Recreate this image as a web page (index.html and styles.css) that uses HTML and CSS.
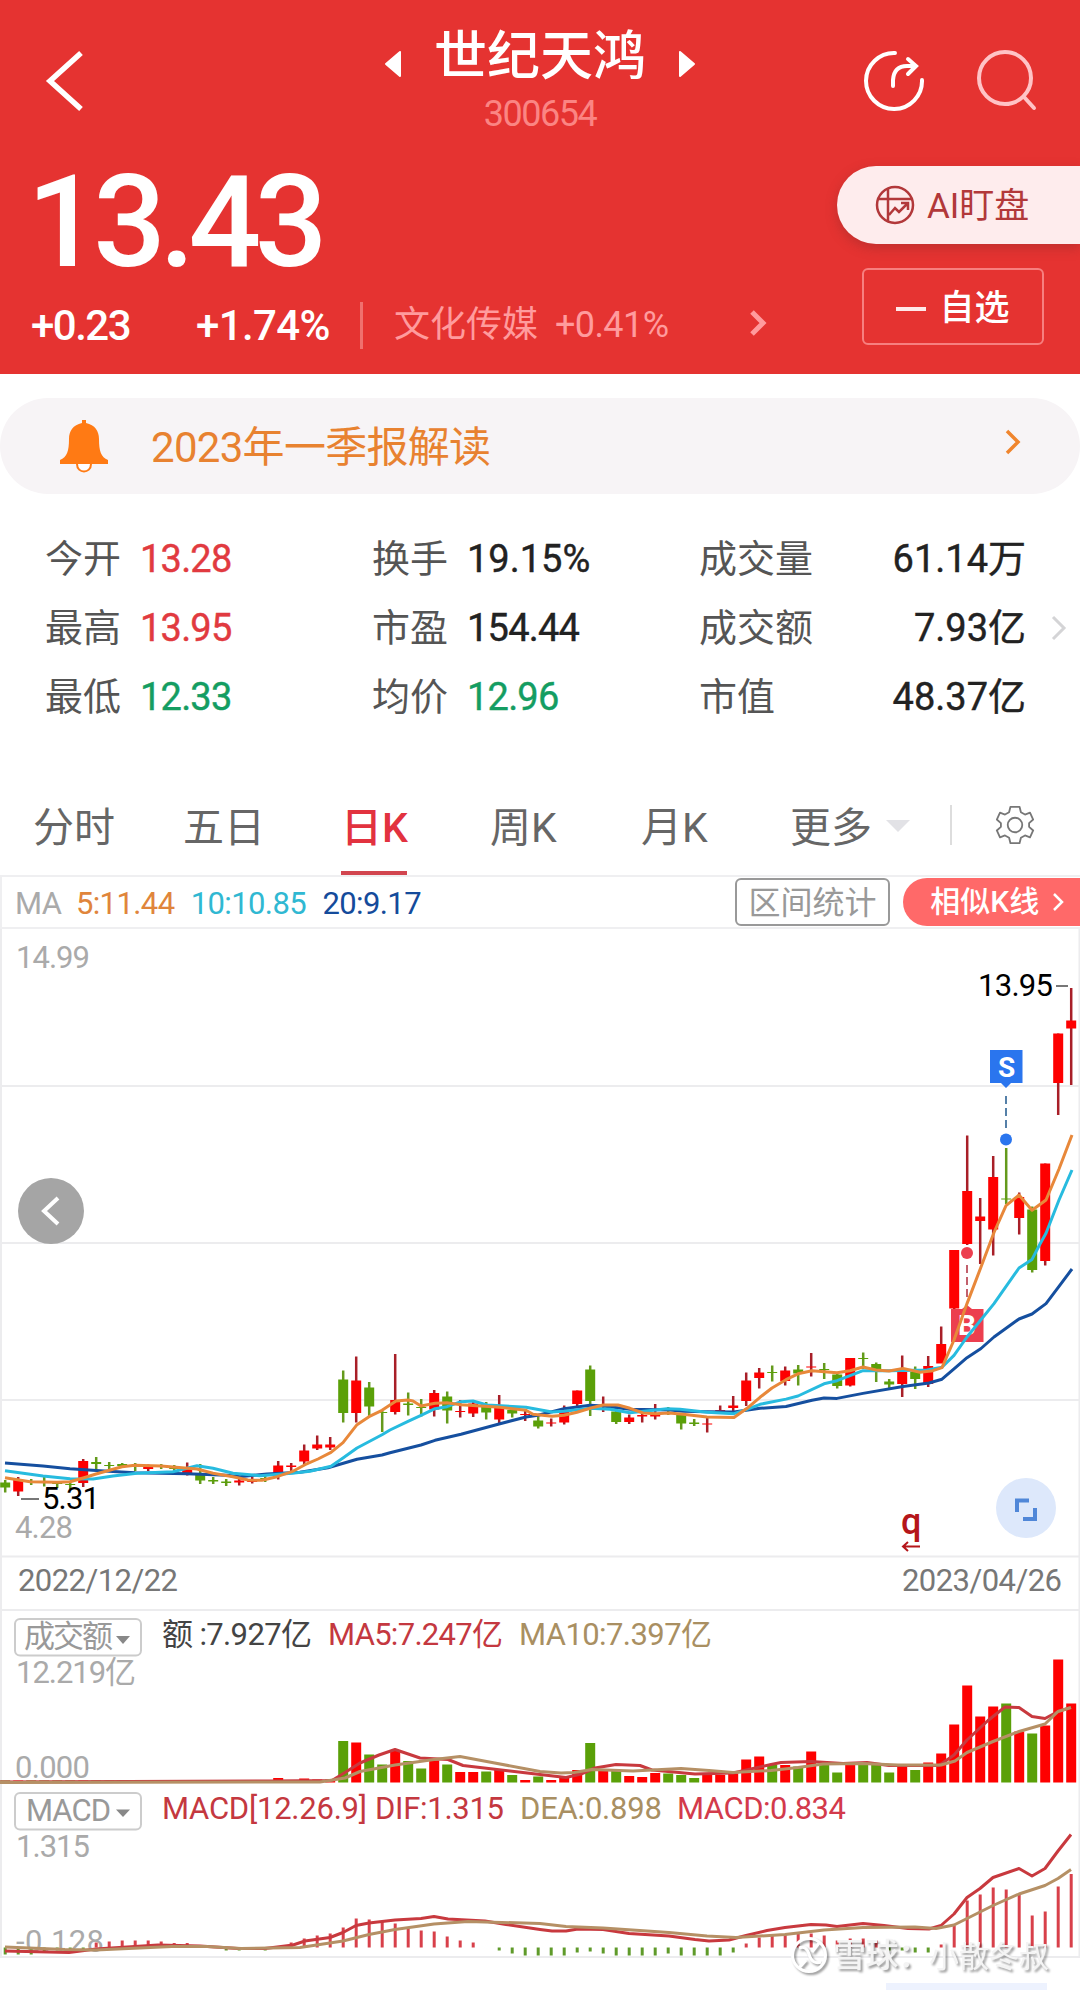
FILE: index.html
```html
<!DOCTYPE html>
<html lang="zh-CN">

<head>
    <meta charset="UTF-8">
    <meta name="viewport" content="width=device-width, initial-scale=1.0">
    <title>世纪天鸿 300654</title>
    <link rel="stylesheet" href="styles.css">
</head>

<body>
    <!-- 顶部行情 -->
    <header class="header">
        <div class="navbar">
            <svg class="back" width="40" height="64" viewBox="0 0 40 64"><path d="M37 4 L6 32 L37 60" /></svg>
            <div class="stock">
                <div class="stock-name">
                    <svg width="18" height="28" viewBox="0 0 18 28"><path d="M16 2 V26 L2 14 Z" /></svg>
                    <h1>世纪天鸿</h1>
                    <svg width="18" height="28" viewBox="0 0 18 28"><path d="M2 2 V26 L16 14 Z" /></svg>
                </div>
                <div class="stock-code">300654</div>
            </div>
            <svg class="share" width="62" height="62" viewBox="0 0 62 62">
                <path d="M31 3 A28 28 0 1 0 58 30" />
                <path d="M29 36 V30 Q30 16 43 16 H51 M44 9 L52 16 L44 24" />
            </svg>
            <svg class="search" width="62" height="62" viewBox="0 0 62 62">
                <circle cx="28" cy="28" r="26" />
                <path d="M47 47 L57 58" />
            </svg>
        </div>
        <div class="quote">
            <div class="quote-left">
                <div class="price">13.43</div>
                <div class="change">
                    <span class="diff">+0.23</span>
                    <span class="percent">+1.74%</span>
                    <span class="industry">文化传媒</span>
                    <span class="industry-percent">+0.41%</span>
                    <svg width="18" height="28" viewBox="0 0 18 28"><path d="M3 3 L14 14 L3 25" /></svg>
                </div>
            </div>
            <div class="quote-right">
                <div class="ai-button">
                    <svg width="40" height="40" viewBox="0 0 40 40">
                        <circle cx="20" cy="20" r="18" />
                        <path d="M13 4 V36 M4 14 H37 M14 30 L20 23 L24 27 L33 18 M26 18 H33 V25" />
                    </svg>
                    <span>AI盯盘</span>
                </div>
                <div class="watch-button"><i></i><span>自选</span></div>
            </div>
        </div>
    </header>

    <div class="notice">
        <svg class="bell" width="50" height="54" viewBox="0 0 50 54">
            <path class="bell-body" d="M23 1 H27 V4 C36 6 40 12 40 20 C40 32 42 38 49 41 V45 H1 V41 C8 38 10 32 10 20 C10 12 14 6 23 4 Z" />
            <path class="bell-clapper" d="M18 45 C18 55 32 55 32 45" />
        </svg>
        <span>2023年一季报解读</span>
        <svg class="arrow" width="18" height="28" viewBox="0 0 18 28"><path d="M3 3 L14 14 L3 25" /></svg>
    </div>

    <!-- 盘口数据 -->
    <section class="stats">
        <dl>
            <div><dt>今开</dt><dd class="up">13.28</dd></div>
            <div><dt>最高</dt><dd class="up">13.95</dd></div>
            <div><dt>最低</dt><dd class="down">12.33</dd></div>
        </dl>
        <dl>
            <div><dt>换手</dt><dd class="rate">19.15%</dd></div>
            <div><dt>市盈</dt><dd>154.44</dd></div>
            <div><dt>均价</dt><dd class="down">12.96</dd></div>
        </dl>
        <dl class="wide">
            <div><dt>成交量</dt><dd>61.14万</dd></div>
            <div><dt>成交额</dt><dd>7.93亿</dd></div>
            <div><dt>市值</dt><dd>48.37亿</dd></div>
        </dl>
        <svg width="18" height="28" viewBox="0 0 18 28"><path d="M3 3 L14 14 L3 25" /></svg>
    </section>

    <nav class="tabs">
        <a>分时</a>
        <a>五日</a>
        <a class="active">日K</a>
        <a>周K</a>
        <a>月K</a>
        <a>更多<i class="caret"></i></a>
        <svg class="gear" width="44" height="44" viewBox="0 0 44 44">
            <path d="M17 2 H27 L28.500 8 L33 10.500 L38.500 8.500 L42 16 L37.500 20 V24 L42 28 L38.500 35.500 L33 33.500 L28.500 36 L27 42 H17 L15.500 36 L11 33.500 L5.500 35.500 L2 28 L6.500 24 V20 L2 16 L5.500 8.500 L11 10.500 L15.500 8 Z" />
            <circle cx="22" cy="22" r="8" />
        </svg>
    </nav>

    <div class="ma-bar">
        <span class="ma-title">MA</span>
        <span class="ma5">5:11.44</span>
        <span class="ma10">10:10.85</span>
        <span class="ma20">20:9.17</span>
        <span class="range-button">区间统计</span>
        <span class="similar-button">相似K线<svg width="12" height="20" viewBox="0 0 12 20"><path d="M2 2 L10 10 L2 18" /></svg></span>
    </div>

    <!-- K线 / 成交额 / MACD -->
    <svg class="chart" width="1080" height="1061" viewBox="0 929 1080 1061">
        <g class="grid">
            <path d="M0 1086 H1080 M0 1243 H1080 M0 1400 H1080 M0 1556.500 H1080 M0 1610 H1080 M0 1957 H1080" />
            <path d="M1 929 V1957 M1079.500 929 V1957" />
        </g>

        <g id="candles"></g>

        <g class="sell">
            <path class="dash" d="M1006 1096 V1130" />
            <circle cx="1006" cy="1139.500" r="6" />
            <path d="M990 1050 H1022.500 V1083 H1011 L1006 1088 L1001 1083 H990 Z" />
            <text x="998" y="1077" textLength="17">S</text>
        </g>
        <g class="buy">
            <path class="dash" d="M967 1265 V1300" />
            <circle cx="967" cy="1253" r="6" />
            <path d="M951 1309 H962 L967 1305 L972 1309 H983.500 V1342 H951 Z" />
            <text x="958" y="1335" textLength="18">B</text>
        </g>

        <g id="lines"></g>

        <g class="tick"><path d="M1056 986 H1068 M21 1499 H39" /></g>
        <g class="label">
            <text x="16" y="968" textLength="74">14.99</text>
            <text x="15" y="1538" textLength="58">4.28</text>
            <text class="black" x="978" y="996" textLength="75">13.95</text>
            <text class="black" x="42" y="1509" textLength="58">5.31</text>
            <text class="date" x="18" y="1591" textLength="160">2022/12/22</text>
            <text class="date" x="902" y="1591" textLength="160">2023/04/26</text>
        </g>

        <g class="prev">
            <circle cx="51" cy="1211" r="33" />
            <path d="M58 1198 L44 1211 L58 1224" />
        </g>
        <g class="expand">
            <circle cx="1026" cy="1508" r="30" />
            <path d="M1029 1500.500 H1017 V1512 M1035 1508 V1519 H1023" />
        </g>
        <g class="ex-right">
            <text x="901" y="1534" textLength="20">q</text>
            <path d="M920 1546.500 H903 M908 1542 L903 1546.500 L908 1551" />
        </g>

        <!-- 成交额 -->
        <g class="select">
            <rect x="15" y="1619" width="126" height="36.500" rx="5" />
            <path d="M116 1636 H130 L123 1644 Z" />
            <text x="24" y="1647" textLength="89">成交额</text>
        </g>
        <g class="label">
            <text class="dark" x="162" y="1645" textLength="150">额 :7.927亿</text>
            <text class="red" x="328" y="1645" textLength="175">MA5:7.247亿</text>
            <text class="gold" x="519" y="1645" textLength="193">MA10:7.397亿</text>
            <text x="16" y="1683" textLength="120">12.219亿</text>
            <text x="15" y="1778" textLength="75">0.000</text>
        </g>
        <g id="volume"></g>

        <!-- MACD -->
        <g class="select">
            <rect x="15" y="1793" width="126" height="36.500" rx="5" />
            <path d="M116 1809.500 H130 L123 1817 Z" />
            <text x="26" y="1821" textLength="85">MACD</text>
        </g>
        <g class="label">
            <text class="red" x="162" y="1819" textLength="205">MACD[12.26.9]</text>
            <text class="red" x="375" y="1819" textLength="129">DIF:1.315</text>
            <text class="gold" x="520" y="1819" textLength="142">DEA:0.898</text>
            <text class="pink" x="677" y="1819" textLength="169">MACD:0.834</text>
            <text x="16" y="1857" textLength="74">1.315</text>
            <text x="16" y="1952" textLength="88">-0.128</text>
        </g>
        <g id="macd"></g>

        <rect class="bottom-tip" x="886" y="1983" width="161" height="7" />
        <g class="watermark">
            <circle cx="809" cy="1955" r="16.500" />
            <path d="M799 1948 Q806 1945 809 1954 Q812 1965 821 1962 M819 1943 L812 1952 M806 1960 L799 1968" />
            <text class="brand" x="833" y="1967" textLength="98">雪球：</text>
            <text x="929" y="1967" textLength="120">小散冬叔</text>
        </g>
    </svg>
    <script src="script.js"></script>
</body>

</html>
```
FILE: styles.css
```css
* {
    box-sizing: border-box;
}

body {
    margin: 0;
    width: 1080px;
    height: 1990px;
    overflow: hidden;
    background: #fff;
    font-family: Roboto, "Noto Sans CJK SC", sans-serif;
}

svg {
    display: block;
    flex-shrink: 0;
    fill: none;
}

/* 顶部 */
.header {
    height: 374px;
    background: #e53331;
    color: #fff;
}

.navbar {
    display: flex;
    height: 150px;
    padding: 0 40px 0 44px;
}

.back {
    margin-top: 49px;
    stroke: #fff;
    stroke-width: 5.500;
}

.stock {
    width: 340px;
    margin-left: 286px;
}

.stock-name {
    display: flex;
    justify-content: center;
    align-items: center;
    gap: 32px;
    height: 92px;
    padding-top: 22px;
}

.stock-name h1 {
    margin: 0;
    font-size: 53px;
    line-height: 70px;
    font-weight: 500;
}

.stock-name svg {
    margin-top: 14px;
    fill: #fff;
    stroke: #fff;
    stroke-width: 2;
    stroke-linejoin: round;
}

.stock-code {
    font-size: 36px;
    line-height: 44px;
    letter-spacing: -1.5px;
    text-align: center;
    color: #fb8583;
}

.share {
    margin: 50px 0 0 154px;
    stroke: #fff;
    stroke-width: 4;
    stroke-linecap: round;
}

.search {
    margin: 50px 0 0 51px;
    stroke: #ffc3c6;
    stroke-width: 4;
    stroke-linecap: round;
}

.quote {
    display: flex;
    justify-content: space-between;
}

.price {
    margin: 7px 0 0 27px;
    font-size: 128px;
    line-height: 130px;
    letter-spacing: -6.5px;
    font-weight: 500;
}

.change {
    display: flex;
    align-items: center;
    height: 60px;
    margin-top: 8px;
    padding-left: 31px;
    font-size: 42px;
    font-weight: 500;
    letter-spacing: -1.5px;
}

.diff {
    width: 165px;
}

.percent {
    width: 164px;
    letter-spacing: -0.6px;
}

.industry {
    height: 47px;
    padding-left: 31px;
    border-left: 3px solid #f0706e;
    font-size: 36px;
    line-height: 46px;
    font-weight: 400;
    letter-spacing: 0;
    color: #ff9b9d;
}

.industry-percent {
    width: 194px;
    margin-left: 17px;
    font-size: 36px;
    font-weight: 400;
    letter-spacing: -0.6px;
    color: #ff9b9d;
}

.change svg {
    margin-bottom: 4px;
    stroke: #ff9b9d;
    stroke-width: 5;
}

.quote-right {
    width: 243px;
    padding-top: 16px;
}

.ai-button {
    display: flex;
    align-items: center;
    gap: 12px;
    height: 78px;
    padding-left: 38px;
    border-radius: 39px 0 0 39px;
    background: #feeced;
    box-shadow: 0 4px 12px rgba(120, 40, 40, 0.35);
    font-size: 35px;
    color: #b2383a;
}

.ai-button svg {
    stroke: #b2383a;
    stroke-width: 2.500;
}

.ai-button span,
.watch-button span {
    margin-bottom: 5px;
}

.watch-button {
    display: flex;
    align-items: center;
    justify-content: center;
    gap: 13px;
    width: 182px;
    height: 77px;
    margin: 24px 0 0 25px;
    border: 2px solid #f77f7f;
    border-radius: 6px;
    font-size: 35px;
    font-weight: 500;
}

.watch-button i {
    width: 30px;
    height: 4px;
    margin-top: 5px;
    background: #ffe9e9;
}

/* 财报提示条 */
.notice {
    display: flex;
    align-items: center;
    height: 96px;
    margin-top: 24px;
    padding: 0 58px 0 59px;
    border-radius: 48px;
    background: #f7f4f6;
    font-size: 42px;
    letter-spacing: -0.7px;
    color: #e88230;
}

.notice span {
    margin: 0 0 6px 42px;
}

.bell-body {
    fill: #ff7a14;
}

.bell-clapper {
    fill: #fff;
    stroke: #ff7a14;
    stroke-width: 2;
}

.arrow {
    margin: -8px 0 0 auto;
    stroke: #f0852d;
    stroke-width: 3.500;
}

.stats {
    display: flex;
    align-items: center;
    height: 278px;
    padding: 0 12px 10px 45px;
    color: #222;
}

.stats dl {
    width: 327px;
    margin: 0;
}

.stats dl div {
    display: flex;
    align-items: center;
    height: 69px;
}

.stats dt {
    margin: 0 19px 7px 0;
    font-size: 38px;
    color: #555;
}

.stats dd {
    margin: 0;
    font-size: 38px;
    letter-spacing: -0.8px;
    font-weight: 400;
    -webkit-text-stroke: 0.4px currentColor;
}

.stats dd.rate {
    letter-spacing: 0;
}

.stats .wide dd {
    margin: 0 0 7px auto;
    letter-spacing: 0;
}

.stats dd.up {
    color: #e13a40;
}

.stats dd.down {
    color: #149d62;
}

.stats svg {
    margin: 0 0 0 auto;
    stroke: #d4d4d6;
    stroke-width: 3;
}

/* 周期切换 */
.tabs {
    display: grid;
    grid-template-columns: 150px 158px 149px 151px 149px 160px 1fr;
    height: 105px;
    padding-left: 33px;
    border-bottom: 2px solid #efeff1;
    font-size: 41px;
    line-height: 113px;
    color: #666;
}

.tabs a {
    position: relative;
    height: 103px;
}

.tabs .active {
    color: #e2323f;
    font-weight: 500;
}

.tabs .active::after {
    content: "";
    position: absolute;
    left: 0;
    bottom: 0;
    width: 66px;
    height: 4px;
    background: #d2454f;
}

.caret {
    display: inline-block;
    margin: 0 0 10px 14px;
    border: 12px solid transparent;
    border-top-color: #e2e2e6;
    border-bottom-width: 0;
}

.gear {
    width: 128px;
    height: 40px;
    margin-top: 33px;
    border-left: 2px solid #ddd;
    stroke: #777;
    stroke-width: 2;
    stroke-linejoin: round;
}

.ma-bar {
    display: flex;
    align-items: center;
    height: 52px;
    padding-left: 13px;
    border-bottom: 2px solid #efeff1;
    border-left: 2px solid #efeff1;
    font-size: 31px;
    line-height: 38px;
    letter-spacing: -0.6px;
}

.ma-title,
.ma5,
.ma10,
.ma20 {
    margin-top: 3px;
}

.ma-title {
    width: 61px;
    color: #aaa;
}

.ma5 {
    width: 115px;
    color: #e0853b;
}

.ma10 {
    width: 132px;
    color: #30b8d2;
}

.ma20 {
    width: 413px;
    color: #144b9b;
}

.range-button {
    width: 156px;
    height: 48px;
    border: 2px solid #999;
    border-radius: 6px;
    font-size: 32px;
    line-height: 46px;
    letter-spacing: 0;
    text-align: center;
    color: #999;
}

.similar-button {
    display: flex;
    align-items: center;
    gap: 13px;
    width: 177px;
    height: 48px;
    margin-left: 13px;
    padding-left: 27px;
    border-radius: 25px 0 0 25px;
    background: #ff6969;
    font-size: 30px;
    line-height: 46px;
    font-weight: 500;
    letter-spacing: 0;
    color: #fff;
}

.similar-button svg {
    stroke: #fff;
    stroke-width: 2.500;
}

/* 图表 */
.chart text {
    font-size: 31px;
}

.grid {
    stroke: #ececee;
    stroke-width: 2;
}

.up-bar {
    fill: #fe0000;
}

.down-bar {
    fill: #5aa008;
}

.up-wick {
    stroke: #a81f28;
    stroke-width: 2.500;
}

.down-wick {
    stroke: #649a1c;
    stroke-width: 2.500;
}

.line {
    stroke-width: 3;
    stroke-linejoin: round;
}

.line-ma5 {
    stroke: #e8883a;
}

.line-ma10 {
    stroke: #27bbdf;
}

.line-ma20 {
    stroke: #154f9f;
}

.line-red {
    stroke: #c8393e;
}

.line-gold {
    stroke: #b59065;
}

.macd-up {
    stroke: #d8404a;
    stroke-width: 3;
}

.macd-down {
    stroke: #5f9a2a;
    stroke-width: 3;
}

.sell {
    fill: #2a75ee;
}

.buy {
    fill: #ec3f4f;
}

.dash {
    stroke-width: 2;
    stroke-dasharray: 8 4;
}

.sell .dash {
    stroke: #5580a8;
}

.buy .dash {
    stroke: #c2606c;
}

.sell text,
.buy text {
    fill: #fff;
    font-size: 28px;
    font-weight: 700;
}

.tick {
    stroke: #777;
    stroke-width: 2;
}

.label text {
    fill: #aaa;
}

.label .black {
    fill: #000;
}

.label .date {
    fill: #777;
}

.label .dark {
    fill: #444;
}

.label .red {
    fill: #c43840;
}

.label .pink {
    fill: #d33a4b;
}

.label .gold {
    fill: #a98f62;
}

.select rect {
    stroke: #ccc;
    stroke-width: 2;
}

.select path {
    fill: #888;
}

.select text {
    fill: #999;
}

.prev circle {
    fill: #a5a5a5;
}

.prev path {
    stroke: #fff;
    stroke-width: 4;
}

.expand circle {
    fill: #dde8fb;
}

.expand path {
    stroke: #5087d8;
    stroke-width: 4;
}

.ex-right text {
    fill: #b5161a;
    font-size: 36px;
    font-weight: 500;
}

.ex-right path {
    stroke: #b5161a;
    stroke-width: 2;
}

.bottom-tip {
    fill: #edf2fe;
}

.watermark {
    filter: drop-shadow(2px 2px 1px rgba(0, 0, 0, 0.4));
}

.watermark circle,
.watermark path {
    stroke: #fff;
    stroke-width: 3;
}

.watermark text {
    fill: #f4f4f4;
    font-size: 30px;
}

.watermark .brand {
    font-size: 33px;
    font-weight: 500;
}
```
FILE: script.js
```js
const STEP = 13;
const START = 5.2;

// [方向, 最高, 最低, 实体上沿, 实体下沿]
const candles = [
    ['g', 1480, 1492.5, 1482.5, 1487.5], ['r', 1477, 1496, 1479.5, 1491.5], ['g', 1479, 1485, 1481, 1482],
    ['g', 1475.5, 1486.5, 1481, 1482], ['g', 1482, 1488, 1483, 1484], ['g', 1481, 1489, 1484, 1485],
    ['r', 1459, 1487, 1461, 1483], ['g', 1457, 1469, 1462, 1464], ['g', 1462, 1469, 1465, 1466],
    ['g', 1463, 1468, 1464, 1466], ['g', 1463, 1471, 1465, 1466], ['r', 1464.5, 1471, 1466.5, 1469],
    ['g', 1464, 1469, 1465, 1467], ['g', 1465, 1473, 1468, 1469], ['r', 1462.5, 1475.5, 1468.5, 1473],
    ['g', 1464, 1484, 1473, 1480.5], ['g', 1477, 1484, 1480, 1481.5], ['g', 1479, 1486, 1481.5, 1483],
    ['r', 1478.5, 1485.5, 1480.5, 1482.5], ['r', 1476.5, 1483.5, 1480, 1482], ['g', 1474, 1482, 1478, 1479],
    ['r', 1461, 1479.5, 1465.5, 1473], ['r', 1463, 1471, 1465.5, 1467], ['r', 1444.5, 1464, 1450.5, 1461.5],
    ['r', 1435.5, 1450, 1444.5, 1448.5], ['r', 1437, 1450, 1444.5, 1447.5], ['g', 1370.5, 1422.5, 1379.5, 1413],
    ['r', 1356.5, 1422.5, 1380.5, 1413], ['g', 1382, 1416.5, 1387.5, 1406.5], ['g', 1411, 1432, 1412, 1413],
    ['r', 1354, 1414.5, 1400, 1412], ['g', 1392.5, 1415.5, 1403.5, 1405], ['g', 1399, 1416.5, 1407, 1408],
    ['r', 1390, 1416.5, 1393, 1409.5], ['g', 1391.5, 1423.5, 1396.5, 1410.5], ['r', 1400, 1417.5, 1411, 1412],
    ['r', 1401, 1417, 1403.5, 1413.5], ['g', 1402, 1419.5, 1405, 1412.5], ['r', 1395, 1425, 1407.5, 1419.5],
    ['g', 1409.5, 1417.5, 1410, 1413.5], ['r', 1410, 1421, 1414, 1415], ['g', 1415, 1428.5, 1420.5, 1426.5],
    ['r', 1418.5, 1426.5, 1422.5, 1423.5], ['r', 1405.5, 1424.5, 1409.5, 1422.5], ['r', 1390.5, 1408, 1390.5, 1404],
    ['g', 1365.5, 1416, 1369.5, 1401], ['r', 1396.5, 1412, 1405, 1407], ['g', 1410.5, 1424, 1411.5, 1422],
    ['r', 1414.5, 1424, 1417.5, 1422], ['r', 1411.5, 1422.5, 1415, 1416.5], ['r', 1404, 1419.5, 1414, 1416.5],
    ['g', 1407, 1415, 1412, 1413], ['g', 1413.5, 1429.5, 1415, 1423.5], ['g', 1419, 1426, 1422.5, 1424],
    ['r', 1417.5, 1432.5, 1423.5, 1424.5], ['r', 1405.5, 1412, 1410, 1412], ['r', 1396, 1411.5, 1405.5, 1408],
    ['r', 1372.5, 1406, 1380.5, 1401], ['r', 1368, 1388.5, 1372.5, 1378], ['g', 1365.5, 1381.5, 1372, 1373],
    ['r', 1366.5, 1385.5, 1370.5, 1381], ['g', 1365, 1385.5, 1369.5, 1373.5], ['r', 1353, 1376.5, 1366.5, 1367.5],
    ['g', 1363, 1379, 1369, 1370], ['g', 1372.5, 1388.5, 1374.5, 1386], ['r', 1358, 1386.5, 1358, 1385.5],
    ['g', 1352.5, 1369, 1358, 1359], ['g', 1362.5, 1382, 1364, 1370], ['g', 1379, 1390, 1381.5, 1384.5],
    ['r', 1355.5, 1397, 1372, 1384], ['g', 1366.5, 1389, 1372, 1379], ['r', 1356, 1387, 1366, 1384],
    ['r', 1326.5, 1363, 1344, 1363.5], ['r', 1250, 1314, 1250, 1308.5], ['r', 1135.5, 1245, 1191, 1244],
    ['r', 1198, 1264, 1216.5, 1221], ['r', 1156, 1255.5, 1177, 1229.5], ['g', 1148, 1204, 1198.5, 1199.5],
    ['r', 1192.5, 1234.5, 1197, 1218], ['g', 1206.5, 1272.5, 1209.5, 1270], ['r', 1163.5, 1265.5, 1163.5, 1261],
    ['r', 1033.5, 1115, 1033.5, 1083], ['r', 988, 1085, 1020.5, 1028.5]
];

// 成交额柱高
const volumes = [
    2, 2, 2, 2, 2, 2, 2, 2, 2, 2, 2, 2, 2, 2, 2, 2, 2, 2, 2, 2, 2, 4.5, 2, 4, 3, 3,
    41.5, 40, 28, 18, 32.5, 21.5, 14, 22, 18, 10.5, 10.5, 11, 13, 7.5, 2.5, 6,
    2.5, 6, 12.5, 39.5, 12, 11.5, 6.5, 5.5, 9.5, 9, 7.5, 4.5, 9.5, 7.5, 9, 23, 26, 17.5, 17.5, 16, 31,
    17.5, 10, 19, 19, 17.5, 10, 15.5, 12.5, 20, 29, 58, 97, 66, 76, 79, 51, 49, 57, 123, 79
];

const macd = [
    -7, -7, -7, -5, -3, -3, -2, 5, 6, 7, 7, 7, 6, 4.5, 4.5, 2, 1, -3, -3, -2, -3, 1, 5, 9, 12, 14,
    20, 29, 28, 26, 24, 19, 17, 16, 11, 7, 5, 0, -3, -6, -8, -8, -8, -8, -5, -4, -6, -8, -8, -8, -8,
    -6, -8, -8, -8, -8, -5, 4, 10, 12, 13, 14, 14, 12, 7, 9, 9, 7, -3, -3, -5, -5, 3,
    22, 47, 53, 60, 58, 53, 32, 36, 61, 73.5
];

const ma20 = '5,1463 43,1466 70,1468.7 100,1470.7 135,1472.7 187,1473.7 227,1475.3 240,1476.7 267,1474 300,1472.3 328,1467.7 357,1459.3 382,1455 390,1452.7 421,1445 435,1440.3 461,1434.3 500,1423.7 526,1417 538,1415.3 552,1411.7 564,1408.7 590,1405.3 603,1406 630,1409.3 670,1410 683,1411.3 707,1411.7 734,1412 760,1408.3 786,1406.5 812,1400.3 824,1398 837,1398.4 863,1393.4 903,1386.5 929,1383 942,1379.2 954,1368.8 967,1357.7 981,1348.5 994,1337 1019,1319 1032,1314 1046,1303.6 1059,1286.3 1072,1269';
const ma10 = '5,1470.7 43,1476 70,1478.7 93,1479 113,1476 137,1473.3 173,1471.7 197,1465.7 213,1468.3 233,1473.3 260,1475.7 292,1473.3 310,1471.3 331,1466.3 343,1458 357,1448 382,1434.7 390,1430 408,1421.3 421,1415.3 435,1408.7 447,1406.7 461,1401.7 473,1401 487,1405 526,1407.3 552,1412 564,1411.3 590,1408.3 610,1409.3 630,1412.7 667,1408.7 680,1409.3 707,1412.3 734,1413.7 747,1409.3 760,1404.3 786,1399.1 798,1396 824,1383.8 837,1380.7 850,1375.7 863,1370.7 889,1370.7 927,1370 942,1367.3 954,1355.4 967,1337 994,1303.6 1019,1268 1032,1259.4 1040,1244 1046,1233.3 1059,1200 1072,1170';
const ma5 = '5,1477.7 30,1481.7 57,1482.3 70,1481.7 84,1477.7 96,1474 113,1469.3 122,1466.7 135,1465.3 161,1466 197,1469 213,1473.3 233,1476.7 248,1480 262,1480.3 277,1476.7 292,1471.7 305,1464.7 318,1459 331,1452.3 343,1442.7 357,1424.7 369,1416.7 382,1410.3 396,1401 408,1400 413,1401 421,1406 435,1403.3 447,1402.7 461,1404.7 500,1407.3 526,1410.3 533,1414.3 552,1416.3 564,1415.3 577,1412.3 590,1408.3 603,1405 618,1405 630,1408.3 643,1413 656,1413.7 669,1413 683,1414.3 707,1417 734,1417.5 747,1408.3 760,1397.3 772,1388 786,1379.7 798,1373.8 812,1370.7 837,1372.7 850,1370.7 863,1367 876,1370 889,1371 903,1368.4 920,1372.3 933,1370.7 942,1367.7 954,1340 967,1303.6 981,1267 994,1232.5 1006,1205.7 1019,1195 1032,1210.3 1046,1200 1059,1169 1072,1135';

const volMa5 = '0,1782 270,1781 332,1780.5 341,1775 360,1763 379,1755 395,1749.5 420,1758 448,1759.5 463,1765.5 510,1771 540,1774.5 566,1777.5 581,1774 595,1768 616,1764.5 640,1765.5 652,1770 695,1774 733,1773 771,1764.5 781,1762.5 811,1761.5 843,1763.5 867,1762.5 889,1765.5 939,1765.5 954,1755 967,1740 988,1720.5 1005,1707 1019,1707.5 1032,1716.5 1045,1718.5 1058,1711.5 1071,1707.5';
const volMa10 = '0,1782.5 320,1782 345,1778 360,1771.5 395,1765 434,1759.5 460,1756.5 492,1762.5 540,1771.5 561,1773 574,1772.5 592,1769.5 633,1771 681,1768.5 709,1770.5 733,1772.5 771,1770.5 798,1767.5 823,1764 862,1763.5 898,1765 941,1765 955,1761 967,1752.5 993,1741.5 1019,1731.5 1045,1724 1058,1711.5 1071,1707.5';

const dif = '5,1951 69,1952.5 96,1949 158,1945 200,1946 238,1948.5 265,1948.5 293,1945 305,1941 330,1937.5 343,1932.5 356,1925.5 369,1923 395,1920 421,1918.5 434,1916.5 448,1919 485,1921 506,1924.5 540,1929.5 552,1931 566,1931 578,1929 603,1929.5 629,1933.5 669,1936 695,1939.5 709,1941 729,1940 746,1935.5 767,1930.5 785,1927.5 811,1924.5 826,1925 837,1926.5 863,1923.5 884,1925.5 908,1928.5 929,1929 941,1925.5 954,1914 967,1897.5 980,1888.5 993,1877.5 1019,1868.5 1032,1876 1045,1868.5 1058,1851 1071,1834.5';
const dea = '5,1947 65,1949.5 96,1950 172,1946.5 207,1946.5 241,1948.5 300,1947.5 343,1941 369,1934.5 395,1929.5 434,1924 468,1921.5 540,1923.5 566,1926.5 603,1928 669,1932.5 707,1936 736,1937.5 785,1934.5 824,1930 863,1927.5 915,1927 936,1928.5 954,1925 967,1918.5 993,1905.5 1019,1894 1045,1885.5 1058,1878.5 1071,1869.5';

function draw(parent, tag, attrs) {
    const el = document.createElementNS('http://www.w3.org/2000/svg', tag);
    for (const key in attrs) el.setAttribute(key, attrs[key]);
    document.getElementById(parent).appendChild(el);
}

function bar(parent, x, top, height, dir) {
    draw(parent, 'rect', { x: x - 5, y: top, width: 10, height: height, class: dir === 'r' ? 'up-bar' : 'down-bar' });
}

function line(parent, points, name) {
    draw(parent, 'polyline', { points: points, class: 'line ' + name });
}

candles.forEach(([dir, high, low, top, bottom], i) => {
    const x = START + STEP * i;
    draw('candles', 'path', { d: `M${x} ${high} V${low}`, class: dir === 'r' ? 'up-wick' : 'down-wick' });
    bar('candles', x, top, bottom - top, dir);
    bar('volume', x, 1782.5 - volumes[i], volumes[i], dir);
    draw('macd', 'path', { d: `M${x} 1947.5 v${-macd[i]}`, class: macd[i] > 0 ? 'macd-up' : 'macd-down' });
});

line('lines', ma20, 'line-ma20');
line('lines', ma10, 'line-ma10');
line('lines', ma5, 'line-ma5');
line('volume', volMa5, 'line-red');
line('volume', volMa10, 'line-gold');
line('macd', dif, 'line-red');
line('macd', dea, 'line-gold');
```
